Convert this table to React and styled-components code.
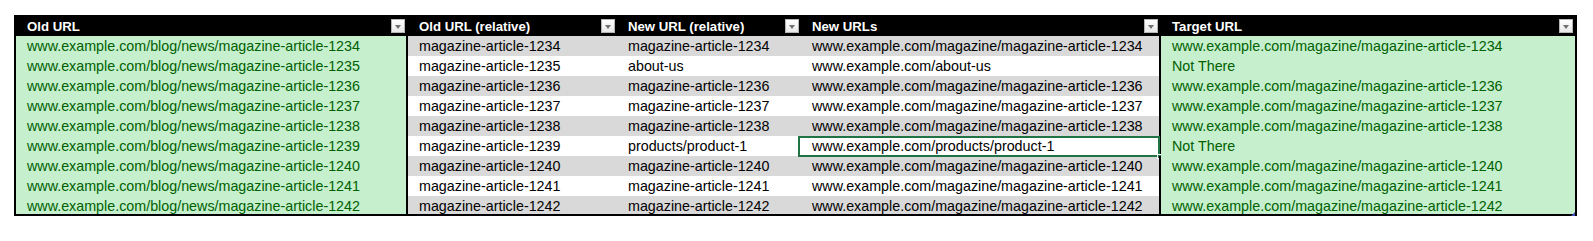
import React from "react";
import styled, { createGlobalStyle } from "styled-components";

const Global = createGlobalStyle`
  html, body { margin: 0; padding: 0; background: #ffffff; }
  body { font-family: "Liberation Sans", Arial, sans-serif; }
`;

const COLS = "392px 209px 184px 360px 414px";

const Page = styled.div`
  padding: 15px 14px;
`;

const Table = styled.div`
  position: relative;
  width: 1563px;
  box-sizing: border-box;
  border: 2px solid #000;
  border-bottom: none;
  &::after {
    content: "";
    position: absolute;
    left: 0;
    right: 0;
    bottom: 0;
    height: 2px;
    background: #000;
  }
`;

const HeaderRow = styled.div`
  display: grid;
  grid-template-columns: ${COLS};
  height: 19px;
  background: #000;
`;

const HeaderCell = styled.div`
  display: flex;
  align-items: center;
  justify-content: space-between;
  padding-left: 11px;
  padding-right: ${(p) => (p.$edge ? "3px" : "2px")};
  color: #fff;
  font-weight: bold;
  font-size: 13.2px;
  white-space: nowrap;
  box-sizing: border-box;
`;

const DropBtn = styled.span`
  width: 14px;
  height: 14px;
  box-sizing: border-box;
  border: 1px solid #b5b5b5;
  background: linear-gradient(#ffffff, #e8e8e8);
  display: flex;
  align-items: center;
  justify-content: center;
  margin-bottom: 1px;
  &::after {
    content: "";
    width: 0;
    height: 0;
    border-left: 3.5px solid transparent;
    border-right: 3.5px solid transparent;
    border-top: 4px solid #707070;
    margin-top: 1px;
  }
`;

const Row = styled.div`
  display: grid;
  grid-template-columns: ${COLS};
  height: 20px;
  background: ${(p) => (p.$band ? "#d9d9d9" : "#ffffff")};
`;

const Cell = styled.div`
  position: relative;
  box-sizing: border-box;
  padding-left: 11px;
  font-size: 14.3px;
  line-height: 20px;
  white-space: nowrap;
  overflow: visible;
  color: #000;
  background: ${(p) => (p.$good ? "#c6efce" : "transparent")};
  ${(p) => p.$good && "color: #006100;"}
  border-right: ${(p) => (p.$divider ? "2px solid #000" : "none")};
`;

const Selection = styled.span`
  position: absolute;
  left: -3px;
  right: -1px;
  top: 0;
  bottom: -1px;
  border: 2px solid #217346;
  pointer-events: none;
  &::after {
    content: "";
    position: absolute;
    right: -4px;
    bottom: -4px;
    width: 5px;
    height: 5px;
    background: #217346;
    border: 1px solid #fff;
    box-sizing: border-box;
  }
`;

const ResizeMark = styled.span`
  position: absolute;
  right: 0;
  bottom: 0;
  z-index: 1;
  width: 0;
  height: 0;
  border-left: 4px solid transparent;
  border-bottom: 4px solid #3f51b5;
`;

const headers = ["Old URL", "Old URL (relative)", "New URL (relative)", "New URLs", "Target URL"];

const ids = [1234, 1235, 1236, 1237, 1238, 1239, 1240, 1241, 1242];

const rows = ids.map((id) => {
  const rel = `magazine-article-${id}`;
  let newRel = rel;
  let newUrl = `www.example.com/magazine/${rel}`;
  let target = newUrl;
  if (id === 1235) {
    newRel = "about-us";
    newUrl = "www.example.com/about-us";
    target = "Not There";
  }
  if (id === 1239) {
    newRel = "products/product-1";
    newUrl = "www.example.com/products/product-1";
    target = "Not There";
  }
  return {
    old: `www.example.com/blog/news/${rel}`,
    rel,
    newRel,
    newUrl,
    target,
    selected: id === 1239,
  };
});

export default function App() {
  return (
    <>
      <Global />
      <Page>
        <Table>
          <HeaderRow>
            {headers.map((h, i) => (
              <HeaderCell key={h} $edge={i === 0 || i === 3}>
                <span>{h}</span>
                <DropBtn />
              </HeaderCell>
            ))}
          </HeaderRow>
          {rows.map((r, i) => (
            <Row key={r.old} $band={i % 2 === 0}>
              <Cell $good $divider>{r.old}</Cell>
              <Cell>{r.rel}</Cell>
              <Cell>{r.newRel}</Cell>
              <Cell $divider>
                {r.newUrl}
                {r.selected && <Selection />}
              </Cell>
              <Cell $good>{r.target}</Cell>
            </Row>
          ))}
          <ResizeMark />
        </Table>
      </Page>
    </>
  );
}
